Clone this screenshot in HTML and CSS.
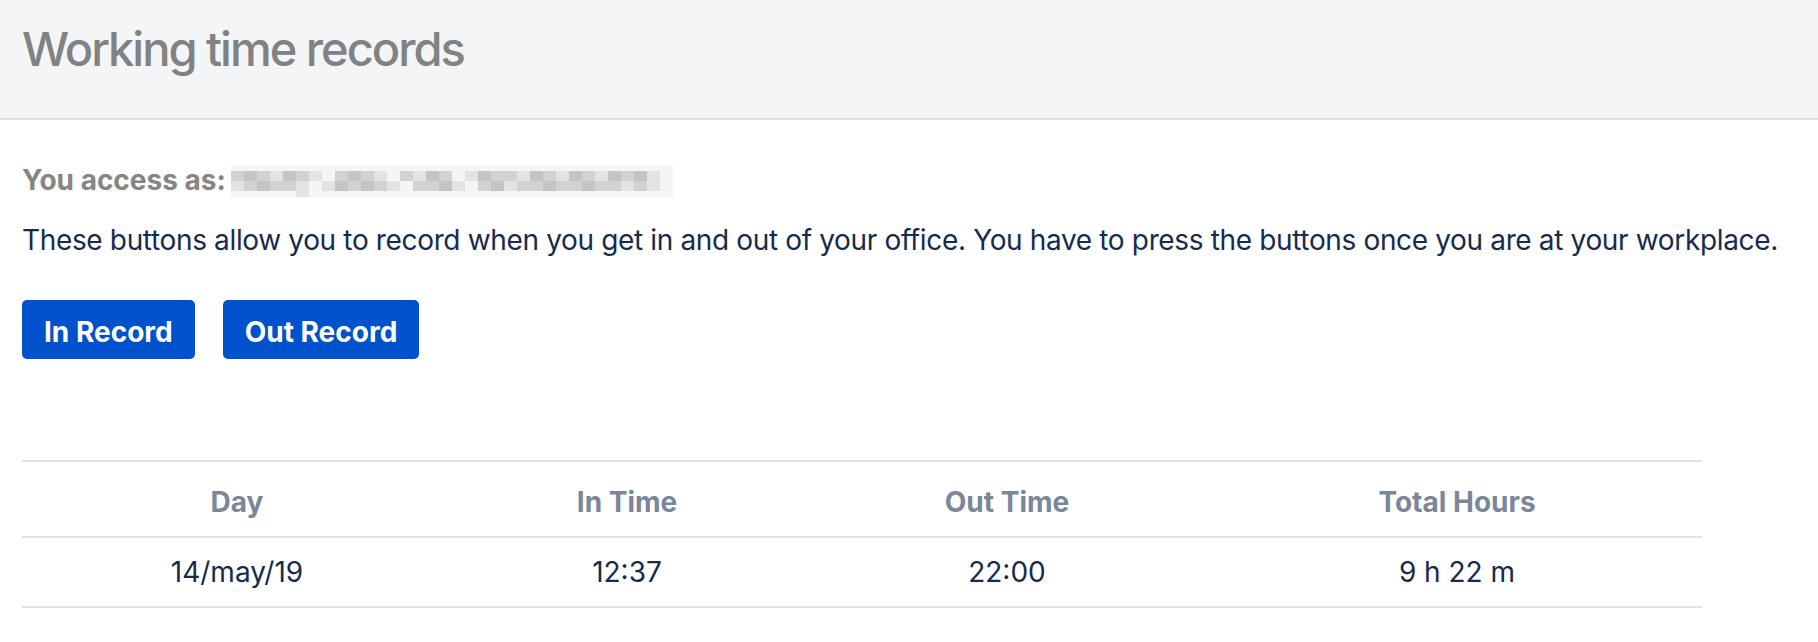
FILE: index.html
```html
<!DOCTYPE html>
<html lang="en">
<head>
<meta charset="utf-8">
<title>Working time records</title>
<link rel="stylesheet" href="styles.css">
</head>
<body>
<header class="page-header">
  <h1 class="title">Working time records</h1>
</header>
<main class="content">
  <p class="access"><span class="access-label">You access as:</span><span class="mosaic" aria-hidden="true"><span class="row light"><i class="c0"></i><i class="c0"></i><i class="c0"></i><i class="c0"></i><i class="c0"></i><i class="c0"></i><i class="c0"></i><i class="c0"></i><i class="c0"></i><i class="c0"></i><i class="c0"></i><i class="c0"></i><i class="c0"></i><i class="c0"></i><i class="c0"></i><i class="c0"></i><i class="c0"></i><i class="c0"></i><i class="c0"></i><i class="c0"></i><i class="c0"></i><i class="c0"></i><i class="c0"></i><i class="c0"></i><i class="c0"></i><i class="c0"></i><i class="c0"></i><i class="c0"></i><i class="c0"></i><i class="c0"></i><i class="c0"></i><i class="c0"></i><i class="c0"></i><i class="c0"></i></span><span class="row"><i class="c2"></i><i class="c3"></i><i class="c2"></i><i class="c1"></i><i class="c3"></i><i class="c2"></i><i class="c1"></i><i class="c0"></i><i class="c2"></i><i class="c3"></i><i class="c2"></i><i class="c1"></i><i class="c0"></i><i class="c2"></i><i class="c1"></i><i class="c3"></i><i class="c2"></i><i class="c0"></i><i class="c1"></i><i class="c3"></i><i class="c2"></i><i class="c2"></i><i class="c1"></i><i class="c3"></i><i class="c2"></i><i class="c1"></i><i class="c3"></i><i class="c2"></i><i class="c1"></i><i class="c3"></i><i class="c2"></i><i class="c3"></i><i class="c1"></i><i class="c0"></i></span><span class="row"><i class="c1"></i><i class="c2"></i><i class="c3"></i><i class="c2"></i><i class="c2"></i><i class="c1"></i><i class="c0"></i><i class="c1"></i><i class="c3"></i><i class="c2"></i><i class="c3"></i><i class="c2"></i><i class="c1"></i><i class="c0"></i><i class="c2"></i><i class="c2"></i><i class="c3"></i><i class="c1"></i><i class="c0"></i><i class="c2"></i><i class="c3"></i><i class="c1"></i><i class="c2"></i><i class="c2"></i><i class="c3"></i><i class="c2"></i><i class="c2"></i><i class="c3"></i><i class="c2"></i><i class="c2"></i><i class="c1"></i><i class="c2"></i><i class="c1"></i><i class="c0"></i></span><span class="row light"><i class="c0"></i><i class="c0"></i><i class="c0"></i><i class="c0"></i><i class="c0"></i><i class="c1"></i><i class="c0"></i><i class="c0"></i><i class="c0"></i><i class="c0"></i><i class="c0"></i><i class="c0"></i><i class="c0"></i><i class="c0"></i><i class="c0"></i><i class="c0"></i><i class="c0"></i><i class="c0"></i><i class="c0"></i><i class="c0"></i><i class="c0"></i><i class="c0"></i><i class="c0"></i><i class="c0"></i><i class="c0"></i><i class="c0"></i><i class="c0"></i><i class="c0"></i><i class="c0"></i><i class="c0"></i><i class="c0"></i><i class="c0"></i><i class="c0"></i><i class="c0"></i></span></span></p>
  <p class="intro">These buttons allow you to record when you get in and out of your office. You have to press the buttons once you are at your workplace.</p>
  <div class="actions">
    <button class="btn" type="button">In Record</button>
    <button class="btn" type="button">Out Record</button>
  </div>
  <table class="records">
    <colgroup>
      <col class="col-day">
      <col class="col-in">
      <col class="col-out">
      <col class="col-total">
    </colgroup>
    <thead>
      <tr><th>Day</th><th>In Time</th><th>Out Time</th><th>Total Hours</th></tr>
    </thead>
    <tbody>
      <tr><td>14/may/19</td><td>12:37</td><td>22:00</td><td>9 h 22 m</td></tr>
    </tbody>
  </table>
</main>
</body>
</html>
```
FILE: styles.css
```css
* { box-sizing: border-box; }
html, body { margin: 0; padding: 0; background: #ffffff; }
body {
  font-family: Inter, "Noto Sans", "Liberation Sans", sans-serif;
  font-size: 28px;
  line-height: 34px;
  color: #172b4d;
}
.page-header {
  height: 120px;
  background: #f4f5f7;
  border-bottom: 2px solid #dfe1e6;
  padding: 20px 22px 0;
}
.title {
  margin: 0;
  font-size: 47px;
  line-height: 57px;
  font-weight: 500;
  color: #808283;
  letter-spacing: -2px;
}
.content {
  padding: 0 22px;
}
.access {
  margin: 43px 0 0;
  display: flex;
  align-items: center;
  height: 34px;
}
.access-label {
  font-weight: 700;
  color: #858585;
}
.mosaic {
  display: flex;
  flex-direction: column;
  margin-left: 5px;
  margin-top: 2px;
}
.mosaic .row { display: flex; }
.mosaic i {
  display: block;
  width: 13px;
  height: 10px;
}
.mosaic .light i { height: 6px; }
.mosaic .c0 { background: #f5f5f5; }
.mosaic .c1 { background: #e3e3e3; }
.mosaic .c2 { background: #d2d2d2; }
.mosaic .c3 { background: #c4c4c4; }
.intro {
  margin: 26px 0 0;
  letter-spacing: -0.35px;
  white-space: nowrap;
}
.actions {
  display: flex;
  gap: 28px;
  margin-top: 43px;
}
.btn {
  font: inherit;
  font-weight: 700;
  color: #ffffff;
  background: #0052cc;
  border: 0;
  border-radius: 5px;
  height: 59px;
  padding: 15px 22px 10px;
  line-height: 34px;
}
.records {
  margin-top: 101px;
  width: 1680px;
  border-collapse: collapse;
  table-layout: fixed;
}
.col-day { width: 430px; }
.col-in { width: 350px; }
.col-out { width: 410px; }
.col-total { width: 490px; }
.records th {
  font-weight: 700;
  color: #7a869a;
  text-align: center;
  padding: 23px 0 17px;
  border-top: 2px solid #dfe1e6;
  border-bottom: 2px solid #dfe1e6;
}
.records td {
  text-align: center;
  padding: 17px 0 17px;
  border-bottom: 2px solid #dfe1e6;
}
```
